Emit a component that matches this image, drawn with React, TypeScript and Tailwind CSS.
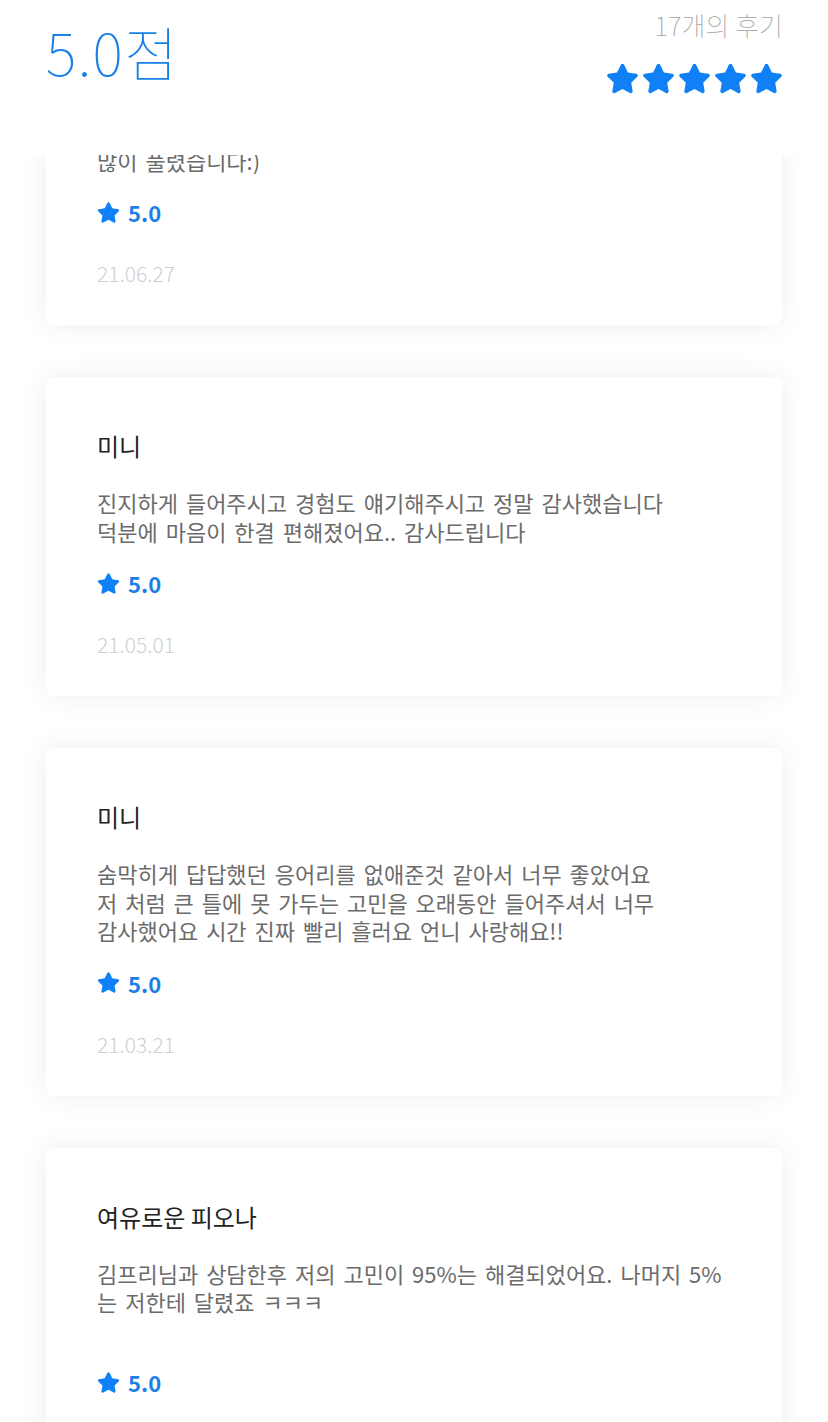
import React from "react";
import { FaStar } from "react-icons/fa";

type Review = { name?: string; lines: string[]; date: string };

const reviews: Review[] = [
  {
    lines: ["많이 풀렸습니다:)"],
    date: "21.06.27",
  },
  {
    name: "미니",
    lines: [
      "진지하게 들어주시고 경험도 얘기해주시고 정말 감사했습니다",
      "덕분에 마음이 한결 편해졌어요.. 감사드립니다",
    ],
    date: "21.05.01",
  },
  {
    name: "미니",
    lines: [
      "숨막히게 답답했던 응어리를 없애준것 같아서 너무 좋았어요",
      "저 처럼 큰 틀에 못 가두는 고민을 오래동안 들어주셔서 너무",
      "감사했어요 시간 진짜 빨리 흘러요 언니 사랑해요!!",
    ],
    date: "21.03.21",
  },
  {
    name: "여유로운 피오나",
    lines: [
      "김프리님과 상담한후 저의 고민이 95%는 해결되었어요. 나머지 5%",
      "는 저한테 달렸죠 ㅋㅋㅋ",
      "",
    ],
    date: "21.02.14",
  },
];

const font = { fontFamily: '"Noto Sans CJK KR", "Noto Sans", sans-serif' };

function Card({ r, first }: { r: Review; first?: boolean }) {
  return (
    <div
      className={`bg-white rounded-[8px] shadow-[0_0_28px_rgba(0,0,0,0.07)] pb-[37px] px-[51px] ${
        first ? "mt-[-9.5px]" : "pt-[52px]"
      }`}
    >
      {r.name && <div className="text-[24px] leading-[34px] text-[#222222] mb-[25px]">{r.name}</div>}
      <div className="text-[22px] leading-[28.5px] text-[#6b6b6b] whitespace-pre [word-spacing:3px]">
        {r.lines.map((l, i) => (
          <div key={i} className="h-[28.5px]">
            {l}
          </div>
        ))}
      </div>
      <div className="mt-[23px] flex items-center gap-[8px] h-[30px]">
        <FaStar className="text-[#0f80f5] w-[23px] h-[23px]" />
        <span className="text-[22px] font-bold text-[#1a7fe6] leading-[30px]">5.0</span>
      </div>
      <div className="mt-[31px] text-[21px] leading-[30px] text-[#cfcfcf] font-light">{r.date}</div>
    </div>
  );
}

export default function App() {
  return (
    <div className="w-[828px] h-[1422px] overflow-hidden bg-white" style={font}>
      <div className="relative z-10 bg-white h-[155px] pl-[46px] pr-[45px] flex justify-between">
        <div className="pt-[15px] text-[58px] leading-[72px] font-thin text-[#1a7fe6] tracking-[1.5px]">
          5.0점
        </div>
        <div className="flex flex-col items-end">
          <div className="pt-[7px] text-[26px] leading-[36px] font-thin text-[#a0a0a0]">17개의 후기</div>
          <div className="mt-[19px] flex gap-[3px]">
            {[0, 1, 2, 3, 4].map((i) => (
              <FaStar key={i} className="text-[#0f80f5] w-[33px] h-[33px]" />
            ))}
          </div>
        </div>
      </div>
      <div className="px-[46px] flex flex-col gap-[52px]">
        {reviews.map((r, i) => (
          <Card key={i} r={r} first={i === 0} />
        ))}
      </div>
    </div>
  );
}
